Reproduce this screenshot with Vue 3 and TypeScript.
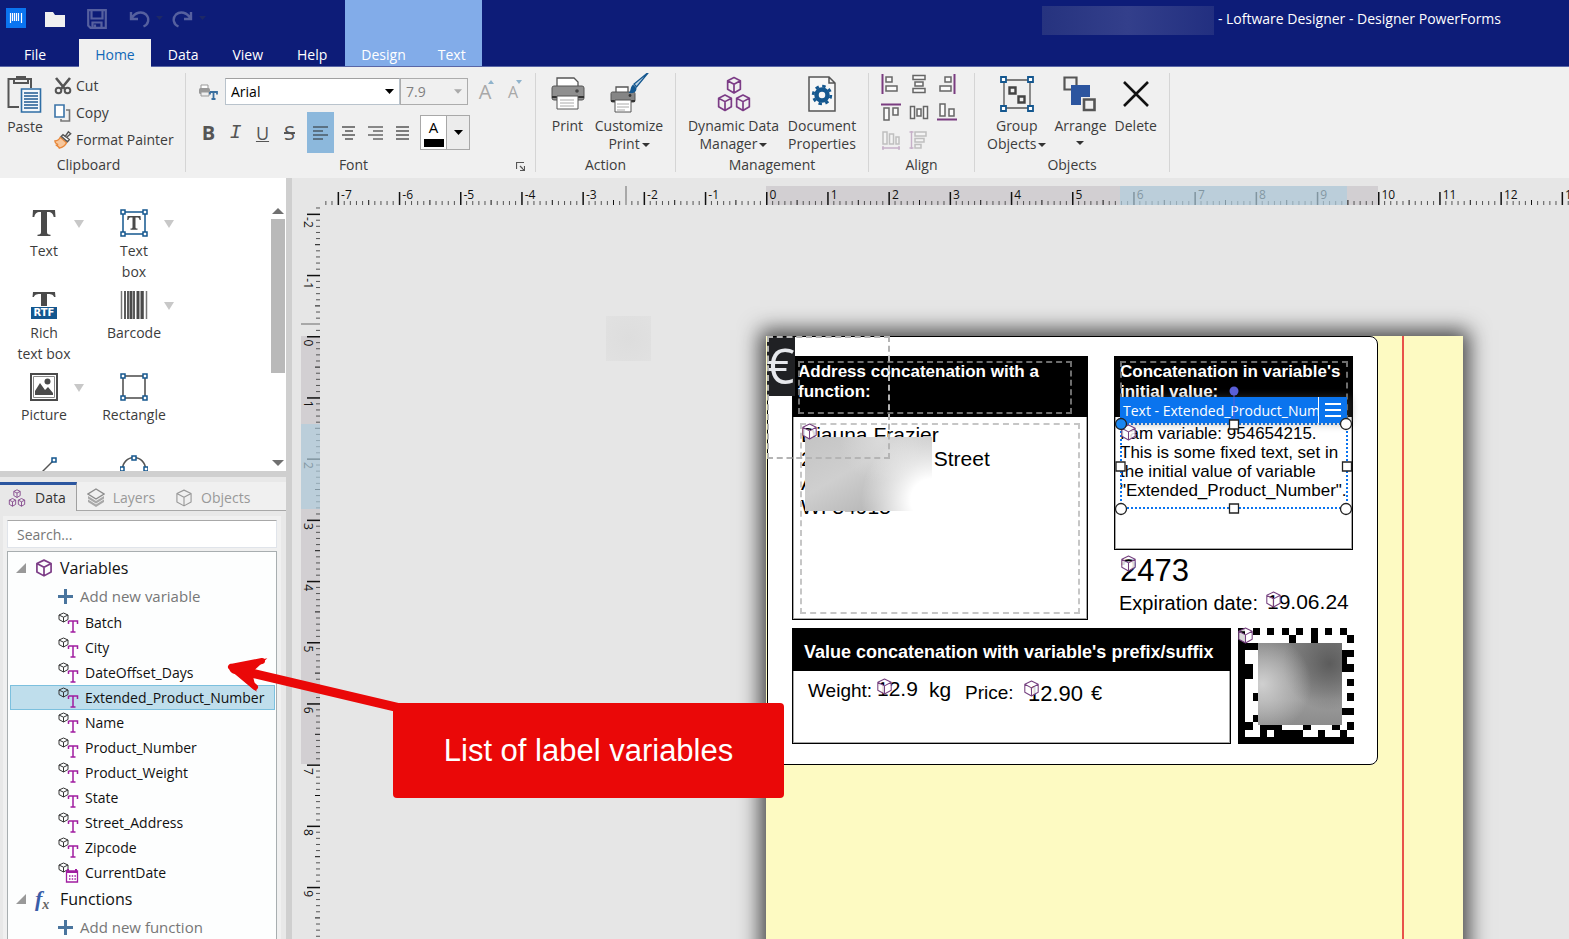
<script setup lang="ts">
import { computed, onBeforeUnmount, onMounted, ref } from 'vue'

interface Tick { pos: number; len: number; strong: boolean }
interface Mark { pos: number; label: string }
interface CanvasText { text: string; x: number; y: number; size: number; line: number }
interface Point { x: number; y: number }

const UNIT = 61.2
const ORIGIN_X = 445.5
const ORIGIN_Y = 130.5

function ticks(from: number, to: number, origin: number): Tick[] {
  const out: Tick[] = []
  for (let i = from; i <= to; i++) {
    const len = i % 10 === 0 ? 13 : i % 5 === 0 ? 5 : 4
    out.push({ pos: origin + (i * UNIT) / 10, len, strong: i % 5 === 0 })
  }
  return out
}
function marks(from: number, to: number, origin: number): Mark[] {
  const out: Mark[] = []
  for (let i = from; i <= to; i++) out.push({ pos: origin + i * UNIT, label: String(i) })
  return out
}

const view = ref({ w: window.innerWidth, h: window.innerHeight })
function measure() {
  view.value = { w: window.innerWidth, h: window.innerHeight }
}
onMounted(() => window.addEventListener('resize', measure))
onBeforeUnmount(() => window.removeEventListener('resize', measure))

const unitsX = computed(() => (view.value.w - 321 - ORIGIN_X) / UNIT)
const unitsY = computed(() => (view.value.h - 206 - ORIGIN_Y) / UNIT)
const hTicks = computed(() => ticks(-72, Math.floor(unitsX.value * 10), ORIGIN_X))
const hMarks = computed(() => marks(-7, Math.floor(unitsX.value), ORIGIN_X))
const vTicks = computed(() => ticks(-21, Math.floor(unitsY.value * 10), ORIGIN_Y))
const vMarks = computed(() => marks(-2, Math.floor(unitsY.value), ORIGIN_Y))

const search = ref('')
const fontName = ref('Arial')
const fontSize = ref('7.9')
const selected = ref('Extended_Product_Number')
const variables = ['Batch', 'City', 'DateOffset_Days', 'Extended_Product_Number', 'Name', 'Product_Number',
  'Product_Weight', 'State', 'Street_Address', 'Zipcode', 'CurrentDate']

const texts: CanvasText[] = [
  { text: '2473', x: 353, y: 217, size: 31, line: 36 },
  { text: 'Expiration date:', x: 352, y: 255, size: 20, line: 24 },
  { text: '19.06.24', x: 500, y: 254, size: 21, line: 24 },
  { text: 'Weight:', x: 41, y: 344, size: 19, line: 22 },
  { text: '12.9', x: 110, y: 342, size: 21, line: 22 },
  { text: 'kg', x: 162, y: 343, size: 21, line: 22 },
  { text: 'Price:', x: 198, y: 346, size: 19, line: 22 },
  { text: '12.90', x: 261, y: 347, size: 22, line: 22 },
  { text: '€', x: 324, y: 346, size: 20, line: 22 },
]
const badges: Point[] = [
  { x: 34, y: 87 }, { x: 353, y: 88 }, { x: 353, y: 219 }, { x: 498, y: 255 },
  { x: 109, y: 342 }, { x: 256, y: 344 }, { x: 470, y: 291 },
]

const matrix = [
  '1010101010101010',
  '1000000100100001',
  '1110001111001000',
  '1000000000000011',
  '1000000000000010',
  '1100000000000011',
  '1100000000000000',
  '1000000000000001',
  '1000000000000000',
  '1010000000000001',
  '1000000000000000',
  '1000000000000011',
  '1010000000000000',
  '1101110001000101',
  '1001011110010010',
  '1111111111111111',
]
const cells = matrix.flatMap((row, y) => [...row].flatMap((c, x) => (c === '1' ? [{ x, y }] : [])))
</script>

<template>
  <div class="app">
    <svg class="defs" aria-hidden="true">
      <symbol id="cube" viewBox="0 0 16 16">
        <path d="M8 1 14.3 4v7.6L8 15 1.7 11.6V4ZM1.7 4 8 7.4 14.3 4M8 7.4V15" stroke="currentColor" stroke-linejoin="round" />
      </symbol>
      <symbol id="cubes" viewBox="0 0 32 34">
        <g fill="none" stroke="currentColor" stroke-width="1.6" stroke-linejoin="round">
          <path id="cb" d="M16 1.5 22 4.5v8L16 16l-6-3.5v-8ZM10 4.5l6 3.2 6-3.2M16 7.700V16" />
          <use href="#cb" x="-8.500" y="16.500" />
          <use href="#cb" x="8.500" y="16.500" />
        </g>
      </symbol>
      <symbol id="tee" viewBox="0 0 24 28">
        <path d="M1 1h22l.5 7h-1.800C21 4.500 19.500 3 16 3h-1v20c0 2 .8 2.500 3.500 2.700V27h-13v-1.300C8.200 25.500 9 25 9 23V3H8C4.500 3 3 4.500 2.300 8H.5Z" fill="currentColor" />
      </symbol>
    </svg>

    <header class="top">
      <div class="titlebar">
        <div class="quick">
          <svg class="logo" viewBox="0 0 20 20"><rect width="20" height="20" fill="#0a74f0" /><path d="M4.500 5v10M6.500 5v8M8.500 5v8M10.500 5v8M12.500 5v8M15.500 5v10" stroke="#fff" stroke-width="1.200" /></svg>
          <button class="qb" aria-label="Open"><svg width="20" height="16" viewBox="0 0 20 16"><path d="M0 1h8l2 3h10v12H0Z" fill="#f0f0f0" /></svg></button>
          <button class="qb dim" aria-label="Save"><svg width="20" height="20" viewBox="0 0 20 20"><path d="M1.200 1.200h17.600v17.600H3.500l-2.300-2.300ZM4.500 1.500v8h11v-8M5.500 19v-5.500h9V19M8 15.500V18" fill="none" stroke="currentColor" stroke-width="2.200" /></svg></button>
          <button class="qb dim" aria-label="Undo"><svg width="34" height="18" viewBox="0 0 34 18"><path d="M2 2v7h7M2.500 8.500C6 2 13 1 17 4.500c4 4 2.500 10-2.500 12" fill="none" stroke="currentColor" stroke-width="2.400" /><path d="M27 6h7l-3.500 4Z" fill="#1d2866" /></svg></button>
          <button class="qb dim" aria-label="Redo"><svg width="34" height="18" viewBox="0 0 34 18"><path d="M19 2v7h-7M18.500 8.500C15 2 8 1 4 4.500c-4 4-2.500 10 2.500 12" fill="none" stroke="currentColor" stroke-width="2.400" /><path d="M27 6h7l-3.500 4Z" fill="#1d2866" /></svg></button>
        </div>
        <div class="title"><span class="redacted"></span><span>- Loftware Designer - Designer PowerForms</span></div>
      </div>
      <nav class="tabs">
        <button class="tab file">File</button>
        <button class="tab active">Home</button>
        <button class="tab wide">Data</button>
        <button class="tab wide">View</button>
        <button class="tab wide">Help</button>
        <div class="context">
          <button class="tab">Design</button>
          <button class="tab">Text</button>
        </div>
      </nav>
    </header>

    <div class="ribbon">
      <section class="group clipboard">
        <div class="body">
          <button class="big">
            <svg width="36" height="38" viewBox="0 0 36 38">
              <path d="M7 3H1.500v28H12M20 3h4v9M7 3h14v4H7ZM10 3V1h8v2" fill="none" stroke="#555" stroke-width="2" />
              <path d="M14.500 13h19v23h-19Z" fill="#f4f8fb" stroke="#2f6ea5" stroke-width="1.600" />
              <path d="M17 17h14M17 20h14M17 23h14M17 26h14M17 29h14M17 32h14" stroke="#1e5a92" stroke-width="1.500" />
            </svg>
            <span>Paste</span>
          </button>
          <div class="smalls">
            <button class="small"><svg width="18" height="18" viewBox="0 0 18 18"><path d="M2 1l9 11M16 1 7 12" stroke="#555" stroke-width="2.600" /><circle cx="4.500" cy="13.500" r="2.800" fill="none" stroke="#555" stroke-width="2" /><circle cx="13.500" cy="13.500" r="2.800" fill="none" stroke="#555" stroke-width="2" /></svg>Cut</button>
            <button class="small"><svg width="18" height="18" viewBox="0 0 18 18"><path d="M1 1h9v12H1Z" fill="#fff" stroke="#3b74a8" stroke-width="1.600" /><path d="M12 6h3.500v11H7v-2" fill="none" stroke="#777" stroke-width="1.600" /></svg>Copy</button>
            <button class="small"><svg width="20" height="20" viewBox="0 0 20 20"><path d="M1 11c4 0 5-2 6-4l7 6c-1 2-3 5-8 6-1-2-2-2-3-3 1 0 1-1 1-1-2-1-3-2-3-4Z" fill="#f7c79c" stroke="#e8883a" stroke-width="1.600" /><path d="m8 6 7 6 2-2.500-3-2.500 4.500-4L16 1l-3.500 5L10 4Z" fill="#fff" stroke="#555" stroke-width="1.600" /></svg>Format Painter</button>
          </div>
        </div>
        <h2>Clipboard</h2>
      </section>

      <section class="group font">
        <div class="body fontbody">
          <div class="fontrow">
            <svg class="pt" width="20" height="18" viewBox="0 0 20 18"><path d="M3 6V2h7v4" fill="#fff" stroke="#999" /><rect x="1" y="5" width="11" height="6" rx="1.500" fill="#999" /><path d="M3 9h8v4H3Z" fill="#eee" stroke="#999" /><path d="M12 9h7v2.500M12 11.500V9M15.500 9v7M13.500 16h4" fill="none" stroke="#3a6f9f" stroke-width="1.800" /></svg>
            <label class="combo family"><select v-model="fontName" aria-label="Font"><option>Arial</option></select><svg width="9" height="5" viewBox="0 0 9 5"><path d="M0 0h9L4.500 5Z" fill="#000" /></svg></label>
            <label class="combo size"><select v-model="fontSize" aria-label="Font size" disabled><option>7.9</option></select><svg width="8" height="5" viewBox="0 0 9 5"><path d="M0 0h9L4.500 5Z" fill="#aaa" /></svg></label>
            <button class="grow" aria-label="Grow font">A<svg width="6" height="4" viewBox="0 0 6 4"><path d="M0 4h6L3 0Z" fill="#8fb3cc" /></svg></button>
            <button class="grow less" aria-label="Shrink font">A<svg width="6" height="4" viewBox="0 0 6 4"><path d="M0 0h6L3 4Z" fill="#8fb3cc" /></svg></button>
          </div>
          <div class="fontrow second">
            <button class="fb bold">B</button>
            <button class="fb ital">I</button>
            <button class="fb under">U</button>
            <button class="fb strike">S</button>
            <button class="fb on" aria-label="Align left"><svg width="16" height="14" viewBox="0 0 16 14"><path d="M0 1h15M0 5h10M0 9h15M0 13h10" stroke="#4a5a66" stroke-width="1.500" /></svg></button>
            <button class="fb" aria-label="Align center"><svg width="14" height="14" viewBox="0 0 14 14"><path d="M0 1h13M3 5h8M0 9h13M3 13h8" stroke="#555" stroke-width="1.500" /></svg></button>
            <button class="fb" aria-label="Align right"><svg width="16" height="14" viewBox="0 0 16 14"><path d="M0 1h15M5 5h10M0 9h15M5 13h10" stroke="#666" stroke-width="1.500" /></svg></button>
            <button class="fb" aria-label="Justify"><svg width="14" height="14" viewBox="0 0 14 14"><path d="M0 1h13M0 5h13M0 9h13M0 13h13" stroke="#555" stroke-width="1.500" /></svg></button>
            <div class="color">
              <button class="ink">A<i></i></button>
              <button class="inkmore" aria-label="Text color"><svg width="9" height="5" viewBox="0 0 9 5"><path d="M0 0h9L4.500 5Z" fill="#000" /></svg></button>
            </div>
          </div>
        </div>
        <h2>Font</h2>
        <button class="launcher" aria-label="Font settings"><svg width="9" height="9" viewBox="0 0 9 9"><path d="M.5 7V.5H8M4 4l4 4M8.500 4v4.500H4" fill="none" stroke="#555" stroke-width="1.200" /></svg></button>
      </section>

      <section class="group action">
        <div class="body">
          <button class="big print">
            <svg width="34" height="36" viewBox="0 0 34 36">
              <path d="M6 10V2h17l4 4v4" fill="#fff" stroke="#555" stroke-width="1.300" />
              <rect x="1" y="10" width="32" height="14" rx="2" fill="#8f8f8f" stroke="#555" /><path d="M1 21h32" stroke="#333" stroke-width="2" /><circle cx="26" cy="15" r="1.800" fill="#444" />
              <path d="M6 20h21v13H6Z" fill="#fff" stroke="#555" /><path d="M9 24h14M9 27h14M9 30h14" stroke="#aaa" />
            </svg>
            <span>Print</span>
          </button>
          <button class="big custom">
            <svg width="40" height="40" viewBox="0 0 40 40">
              <path d="M7 20v-6h12v6" fill="#fff" stroke="#555" stroke-width="1.300" />
              <rect x="2" y="19" width="24" height="10" rx="1.500" fill="#858585" stroke="#555" /><path d="M2 28h24" stroke="#333" stroke-width="2" /><circle cx="21" cy="22.500" r="1.400" fill="#333" />
              <path d="M6 27h16v12H6Z" fill="#fff" stroke="#555" /><path d="M8 31h12M8 34h12M8 37h8" stroke="#aaa" />
              <path d="M38.500 0 25 11l2.500 3L39 0Z" fill="#b9d0e2" stroke="#14578f" stroke-width="1.300" /><path d="M24 11.500 27.500 15c0 5-4 5.500-8 5 3-2 1-5 4.500-8.500Z" fill="#14578f" />
            </svg>
            <span>Customize<br>Print<em></em></span>
          </button>
        </div>
        <h2>Action</h2>
      </section>

      <section class="group manage">
        <div class="body">
          <button class="big dyn"><svg class="purple" width="34" height="36"><use href="#cubes" /></svg><span>Dynamic Data<br>Manager<em></em></span></button>
          <button class="big doc">
            <svg width="28" height="36" viewBox="0 0 28 36">
              <path d="M1 1h20l6 6v28H1ZM21 1v6h6" fill="#f7f7f7" stroke="#555" stroke-width="1.500" />
              <circle cx="14" cy="19" r="5.500" fill="none" stroke="#14578f" stroke-width="4.500" />
              <circle cx="14" cy="19" r="8.800" fill="none" stroke="#14578f" stroke-width="2.800" stroke-dasharray="3.450 3.450" />
            </svg>
            <span>Document<br>Properties</span>
          </button>
        </div>
        <h2>Management</h2>
      </section>

      <section class="group align">
        <div class="body aligngrid">
          <button aria-label="Align left edges"><svg viewBox="0 0 20 20"><path d="M1.500 0v20" stroke="#7a3c80" stroke-width="2" /><path d="M5 3h6v5H5ZM5 12h11v5H5Z" /></svg></button>
          <button aria-label="Center horizontally"><svg viewBox="0 0 20 20"><path d="M4 1.500h12v4H4ZM6 8h8v4H6ZM4 14.500h12v4H4Z" /></svg></button>
          <button aria-label="Align right edges"><svg viewBox="0 0 20 20"><path d="M17.500 0v20" stroke="#7a3c80" stroke-width="2" /><path d="M8 3h6v5H8ZM3 12h11v5H3Z" /></svg></button>
          <button aria-label="Align top edges"><svg viewBox="0 0 20 20"><path d="M0 2.500h20" stroke="#7a3c80" stroke-width="2" /><path d="M3 6h5v12H3ZM12 6h5v7h-5Z" /></svg></button>
          <button aria-label="Center vertically"><svg viewBox="0 0 20 20"><path d="M1.500 4.500h4v12h-4ZM8 7h4v7H8ZM14.500 4.500h4v12h-4Z" /></svg></button>
          <button aria-label="Align bottom edges"><svg viewBox="0 0 20 20"><path d="M0 17.500h20" stroke="#7a3c80" stroke-width="2" /><path d="M3 2h5v12H3ZM12 7h5v7h-5Z" /></svg></button>
          <button class="off" disabled aria-label="Distribute horizontally"><svg viewBox="0 0 20 20"><path d="M1 18h18M2 16v4M18 16v4" stroke="#7a3c80" stroke-width="1.400" /><path d="M2 2h4v12H2ZM8.500 4h4v10h-4ZM15 7h3v7h-3Z" /></svg></button>
          <button class="off" disabled aria-label="Distribute vertically"><svg viewBox="0 0 20 20"><path d="M2.500 1v18M.5 2h4M.5 18h4" stroke="#7a3c80" stroke-width="1.400" /><path d="M6 2h11v4H6ZM6 8.500h9v3.500H6ZM6 14.500h6V18H6Z" /></svg></button>
        </div>
        <h2>Align</h2>
      </section>

      <section class="group objects">
        <div class="body">
          <button class="big grp">
            <svg width="34" height="36" viewBox="0 0 34 36">
              <path d="M4 4h26v28H4Z" fill="none" stroke="#555" stroke-width="1.300" />
              <g fill="#fff" stroke="#14578f" stroke-width="1.800"><path d="M1 1h5v5H1ZM28 1h5v5h-5ZM1 30h5v5H1ZM28 30h5v5h-5Z" /></g>
              <path d="M9.500 11.500h6v6h-6ZM18.500 20.500h6v6h-6Z" fill="none" stroke="#444" stroke-width="2.400" />
            </svg>
            <span>Group<br>Objects<em></em></span>
          </button>
          <button class="big arr">
            <svg width="34" height="36" viewBox="0 0 34 36">
              <path d="M1.500 1.500h12v12h-12Z" fill="none" stroke="#555" stroke-width="2.200" /><path d="M8 9h19v20H8Z" fill="#2c559f" /><path d="M18 21h16v15H18Z" fill="#f0f0f0" /><path d="M21 23.500h10.500v10.500H21Z" fill="none" stroke="#555" stroke-width="2.600" />
            </svg>
            <span>Arrange<br><em></em></span>
          </button>
          <button class="big del">
            <svg width="28" height="36" viewBox="0 0 28 36"><path d="M2 6l24 24M26 6 2 30" stroke="#111" stroke-width="2.600" /></svg>
            <span>Delete</span>
          </button>
        </div>
        <h2>Objects</h2>
      </section>
    </div>

    <main class="work">
      <aside class="side">
        <div class="toolbox">
          <div class="tools">
            <button class="tool"><svg class="ic dark" width="24" height="28"><use href="#tee" /></svg><span>Text</span><i class="more"></i></button>
            <button class="tool"><svg class="ic" width="28" height="28" viewBox="0 0 28 28"><path d="M3 3h22v22H3Z" fill="none" stroke="#14578f" stroke-width="1.500" /><path d="M7.500 7h13l.3 4h-1.200c-.4-1.800-1-2.400-2.600-2.400h-1.500V18c0 1.200.4 1.500 2 1.600v1.100h-7v-1.100c1.600-.1 2-.4 2-1.600V8.600H11c-1.600 0-2.200.6-2.600 2.400H7.200Z" fill="#4a4a4a" /><path d="M1 1h4v4H1ZM23 1h4v4h-4ZM1 23h4v4H1ZM23 23h4v4h-4Z" fill="#fff" stroke="#14578f" stroke-width="1.500" /></svg><span>Text<br>box</span><i class="more"></i></button>
            <button class="tool"><span class="ic rtf"><svg class="dark" width="24" height="16" viewBox="0 0 24 16"><path d="M1 1h22l.5 5h-1.500C21.500 4 20 3 16 3h-1v12H9V3H8C4 3 2.500 4 2 6H.5Z" fill="currentColor" /></svg><b>RTF</b></span><span>Rich<br>text box</span></button>
            <button class="tool"><svg class="ic" width="28" height="28" viewBox="0 0 28 28"><path d="M1.500 0v28M26.500 0v28M23 0v28" stroke="#777" stroke-width="1.500" /><path d="M5 0v28M8 0v28M14 0v28" stroke="#4a4a4a" stroke-width="1.800" /><path d="M11 0v28M18 0v28M22 0v28" stroke="#4a4a4a" stroke-width="3" /></svg><span>Barcode</span><i class="more"></i></button>
            <button class="tool"><svg class="ic" width="28" height="28" viewBox="0 0 28 28"><path d="M1 1h26v26H1Z" fill="#fff" stroke="#4a4a4a" stroke-width="2" /><path d="M3.500 3.500h21v21h-21Z" fill="none" stroke="#888" /><path d="M5 22v-4l5-8 5 7 3-3 5 6v2Z" fill="#4a4a4a" /><circle cx="17.500" cy="8.500" r="3" fill="#4a4a4a" /></svg><span>Picture</span><i class="more"></i></button>
            <button class="tool"><svg class="ic" width="28" height="28" viewBox="0 0 28 28"><path d="M3 3h22v22H3Z" fill="none" stroke="#4a4a4a" stroke-width="1.500" /><path d="M1 1h4v4H1ZM23 1h4v4h-4ZM1 23h4v4H1ZM23 23h4v4h-4Z" fill="#fff" stroke="#14578f" stroke-width="1.500" /></svg><span>Rectangle</span></button>
            <button class="tool" aria-label="Line"><svg class="ic" width="28" height="28" viewBox="0 0 28 28"><path d="M24 5 2 27" stroke="#555" stroke-width="1.400" /><path d="M22 3h4v4h-4Z" fill="#fff" stroke="#14578f" stroke-width="1.500" /></svg></button>
            <button class="tool" aria-label="Ellipse"><svg class="ic" width="28" height="28" viewBox="0 0 28 28"><circle cx="14" cy="14" r="11.500" fill="none" stroke="#555" stroke-width="1.500" /><path d="M12 1h4v4h-4ZM0 12h4v4H0ZM24 12h4v4h-4Z" fill="#fff" stroke="#14578f" stroke-width="1.500" /></svg></button>
          </div>
          <div class="scroll"><i class="up"></i><b></b><i class="down"></i></div>
        </div>

        <div class="panes">
          <button class="pane on"><svg class="purple" width="18" height="18"><use href="#cubes" /></svg>Data</button>
          <button class="pane"><svg width="18" height="20" viewBox="0 0 18 20"><path d="M9 1 17 6 9 11 1 6Z" fill="#f0f0f0" stroke="#8c8c8c" stroke-width="1.400" /><path d="M1 8l8 5 8-5v6l-8 5-8-5Z" fill="#a8a8a8" /><path d="M1 11l8 5 8-5" fill="none" stroke="#e8e8e8" /></svg>Layers</button>
          <button class="pane"><svg width="18" height="20" fill="none"><use href="#cube" /></svg>Objects</button>
        </div>

        <div class="data">
          <input v-model="search" class="search" type="text" placeholder="Search..." aria-label="Search">
          <div class="tree">
            <div class="head"><i class="twist"></i><svg class="purple" width="18" height="18" fill="none" stroke-width="1.500"><use href="#cube" /></svg>Variables</div>
            <button class="add"><svg width="15" height="15" viewBox="0 0 15 15"><path d="M7.500 0v15M0 7.500h15" stroke="#4a759e" stroke-width="3" /></svg>Add new variable</button>
            <button v-for="v in variables" :key="v" class="var" :class="{ sel: v === selected }" @click="selected = v">
              <svg width="21" height="21" viewBox="0 0 21 21">
                <path d="M5.500 1 10 3v4.500L5.500 10 1 7.500V3ZM1 3l4.500 2.200L10 3M5.500 5.200V10" fill="none" stroke="#333" />
                <path v-if="v !== 'CurrentDate'" d="M10.500 9h9v3M10.500 12V9M15 9v11M12.500 20h5" fill="none" stroke="#a01ca0" stroke-width="1.500" />
                <g v-else><path d="M8.500 9h11v11h-11Z" fill="#fff" stroke="#a01ca0" stroke-width="1.300" /><path d="M8 10h12M10 7v3M18 7v3" stroke="#a01ca0" stroke-width="2" /><path d="M11 14h7M11 17h7" stroke="#a01ca0" stroke-width="1.500" stroke-dasharray="1.500 1.200" /></g>
              </svg>{{ v }}
            </button>
            <div class="head"><i class="twist"></i><span class="fx">f<sub>x</sub></span>Functions</div>
            <button class="add"><svg width="15" height="15" viewBox="0 0 15 15"><path d="M7.500 0v15M0 7.500h15" stroke="#4a759e" stroke-width="3" /></svg>Add new function</button>
          </div>
        </div>
      </aside>

      <section class="canvas">
        <svg class="hruler">
          <rect x="445" width="612" height="19" fill="#d2cfd2" />
          <rect v-for="t in hTicks" :key="t.pos" :x="t.pos - 0.5" :y="19 - t.len" :width="t.len === 13 ? 1.500 : 1" :height="t.len" :fill="t.strong ? '#111' : '#555'" />
          <text v-for="m in hMarks" :key="m.label" :x="m.pos + 3" y="13">{{ m.label }}</text>
          <rect x="304" width="2" height="19" fill="#a8a8a8" />
          <rect x="799" width="227" height="19" fill="#b0cddd" opacity=".7" />
        </svg>
        <svg class="vruler">
          <rect y="130" width="19" height="428" fill="#d2cfd2" />
          <rect v-for="t in vTicks" :key="t.pos" :x="19 - t.len" :y="t.pos - 0.5" :width="t.len" :height="t.len === 13 ? 1.500 : 1" :fill="t.strong ? '#111' : '#555'" />
          <text v-for="m in vMarks" :key="m.label" :transform="`translate(3 ${m.pos + 3}) rotate(90)`">{{ m.label }}</text>
          <rect y="117" width="19" height="2" fill="#a8a8a8" />
          <rect y="218" width="19" height="85" fill="#b0cddd" opacity=".7" />
        </svg>

        <div class="stage">
          <div class="smudge"></div>
          <div class="page"></div>
          <div class="label">
            <div class="euro"><span>€</span></div>
            <div class="frame address">
              <h3>Address concatenation with a function:</h3>
            </div>
            <div class="frame initial">
              <h3>Concatenation in variable's initial value:</h3>
            </div>
            <div class="frame prefix">
              <h3>Value concatenation with variable's prefix/suffix</h3>
            </div>
            <div class="dash picture"></div>
            <div class="dash addresstitle"></div>
            <div class="dash initialtitle"></div>
            <div class="dash person">Djauna Frazier<br>2<span class="gap"></span>Street<br>A<br>WI 54915</div>
            <div class="blur name"></div>
            <p v-for="t in texts" :key="t.text" class="txt" :style="{ left: t.x + 'px', top: t.y + 'px', fontSize: t.size + 'px', lineHeight: t.line + 'px' }">{{ t.text }}</p>
            <svg class="matrix" viewBox="0 0 16 16" preserveAspectRatio="none" shape-rendering="crispEdges">
              <rect width="16" height="16" fill="#fff" />
              <rect v-for="c in cells" :key="c.y * 16 + c.x" :x="c.x" :y="c.y" width="1" height="1" />
            </svg>
            <div class="blur code"></div>
            <div class="selected">I am variable: 954654215. This is some fixed text, set in the initial value of variable "Extended_Product_Number".</div>
            <div class="bar"><span>Text - Extended_Product_Number</span><button aria-label="Object menu"><svg width="16" height="14" viewBox="0 0 16 14"><path d="M0 1h16M0 7h16M0 13h16" stroke="#fff" stroke-width="2" /></svg></button></div>
            <svg v-for="b in badges" :key="b.x * 1000 + b.y" class="badge" :style="{ left: b.x + 'px', top: b.y + 'px' }"><use href="#cube" /></svg>
            <svg class="handles" viewBox="0 0 240 130">
              <path d="M120 8v28" stroke="#5a5fd8" /><circle cx="120" cy="8" r="4.500" fill="#5a5fd8" />
              <g fill="#fff" stroke="#222" stroke-width="1.300">
                <circle cx="7" cy="41" r="5.500" fill="#1a86f0" /><circle cx="232" cy="41" r="5.500" /><circle cx="7" cy="126" r="5.500" /><circle cx="232" cy="126" r="5.500" />
                <path d="M115.500 37h9v9h-9ZM115.500 121h9v9h-9ZM2 79h9v9H2ZM228.500 79h9v9h-9Z" />
              </g>
            </svg>
          </div>
        </div>
      </section>
    </main>

    <div class="callout">
      <svg viewBox="0 0 180 50"><path d="M6 11 176 51" class="shaft" /><path d="M2 9 36 2 23 14 27 31Z" class="tip" /><path d="M3 9 34 3M3 9 27 29" /></svg>
      <p>List of label variables</p>
    </div>
  </div>
</template>

<style>
html, body { margin: 0; }
</style>

<style scoped>
.app { position: relative; height: 100vh; overflow: hidden; display: flex; flex-direction: column; font: 14px/18px "Open Sans", "Noto Sans", sans-serif; color: #3c3c3c; background: #e6e6e6; }
.defs { position: absolute; width: 0; height: 0; }
button { font: inherit; color: inherit; background: none; border: 0; padding: 0; margin: 0; }
h2, h3, p { margin: 0; font-weight: 400; }
svg { display: block; flex: none; }
.purple { color: #7c3c86; }
.dark { color: #4a4a4a; }

.top { background: #0d1c78; color: #fff; border-bottom: 1px solid #5966a6; }
.titlebar { display: flex; justify-content: space-between; height: 39px; }
.quick { display: flex; align-items: center; height: 37px; padding-left: 6px; }
.logo { width: 20px; height: 20px; margin-right: 19px; margin-bottom: 2px; }
.qb { margin-right: 22px; }
.qb.dim { color: #56609f; }
.qb.dim + .qb.dim { margin-right: 9px; }
.title { display: flex; align-items: flex-start; padding: 6px 68px 0 0; line-height: 26px; }
.redacted { width: 172px; height: 29px; margin-right: 4px; background: linear-gradient(90deg, #26337f, #333f8b 50%, #222f80); }
.tabs { display: flex; height: 27px; }
.tab { padding: 4px 16px 0; }
.tab.wide { padding: 4px 17px 0; }
.tab.file { padding: 4px 24px 0; margin-right: 9px; }
.tab.active { background: #f0f0f0; color: #1168b8; position: relative; margin-bottom: -1px; }
.context { position: relative; display: flex; margin-left: 1px; background: #82ace9; }
.context::before { content: ""; position: absolute; left: 0; right: 0; bottom: 100%; height: 39px; background: #82ace9; }

.ribbon { display: flex; height: 105px; padding: 6px 0 0; background: #f0f0f0; }
.group { position: relative; display: flex; flex-direction: column; height: 99px; border-right: 1px solid #d5d5d5; box-sizing: border-box; }
.group h2 { font-size: 14px; line-height: 18px; text-align: center; margin-bottom: -2px; }
.body { flex: 1; display: flex; align-items: flex-start; }
.clipboard { width: 186px; }
.clipboard h2 { padding-right: 8px; }
.font { width: 350px; }
.font h2 { padding-right: 14px; }
.action { width: 140px; }
.manage { width: 193px; }
.align { width: 106px; }
.objects { width: 195px; }
.big { display: flex; flex-direction: column; align-items: center; line-height: 18px; padding-top: 3px; white-space: nowrap; }
.big span { margin-top: 5px; }
.big em { display: inline-block; border: 4px solid transparent; border-top-color: #333; border-bottom: 0; margin-left: 2px; vertical-align: middle; }
.clipboard .big { width: 50px; }
.clipboard .big span { margin-top: 4px; }
.smalls { display: flex; flex-direction: column; padding-left: 4px; margin-top: -1px; }
.small { display: flex; align-items: center; gap: 4px; height: 27px; white-space: nowrap; }
.small svg { width: 18px; }
.print { width: 63px; }
.custom { width: 60px; }
.custom svg { height: 40px; margin: -3px 0 -1px; }
.dyn { width: 115px; }
.doc { width: 62px; }
.grp { width: 84px; }
.arr { width: 44px; }
.arr em { display: block; width: 0; margin: 6px auto 0; }
.arr br { display: none; }
.del { width: 67px; }

.fontbody { flex-direction: column; }
.fontrow { display: flex; align-items: center; height: 37px; padding-left: 12px; }
.pt { margin-right: 7px; }
.combo { position: relative; display: block; height: 27px; box-sizing: border-box; border: 1px solid #b9c3cc; border-top-color: #a0a0a0; background: #fff; }
.combo select { width: 100%; height: 100%; appearance: none; border: 0; background: none; font: inherit; padding: 0 5px; color: #000; opacity: 1; }
.combo svg { position: absolute; right: 5px; top: 10px; pointer-events: none; }
.family { width: 175px; }
.size { width: 68px; background: #f0f0f0; border-color: #acacac; }
.size select { color: #808080; }
.grow { position: relative; font: 20px/24px "Open Sans", sans-serif; color: #a8a8a8; width: 16px; margin-left: 9px; }
.grow svg { position: absolute; right: -1px; top: 0; }
.less { font-size: 16px; margin-left: 12px; }
.second { height: 41px; padding-left: 9px; margin-top: 2px; }
.fb { width: 27px; height: 41px; display: flex; align-items: center; justify-content: center; font: 20px/24px "Open Sans", sans-serif; color: #555; }
.fb.bold { font-weight: 700; }
.fb.ital { font-family: "Liberation Mono", monospace; font-style: italic; }
.fb.under { text-decoration: underline; font-size: 18px; }
.fb.strike { text-decoration: line-through; margin-right: 4px; }
.fb.on { background: #8cb8dc; margin-right: 1px; }
.color { display: flex; margin-left: 4px; height: 35px; box-sizing: border-box; border: 1px solid #a8a8a8; background: #fff; }
.ink { width: 25px; font-size: 15px; line-height: 20px; color: #000; display: flex; flex-direction: column; align-items: center; gap: 2px; padding-top: 1px; }
.ink i { width: 20px; height: 8px; background: #000; }
.inkmore { width: 23px; border-left: 1px solid #a8a8a8; background: #ececec; display: flex; align-items: center; justify-content: center; }
.launcher { position: absolute; right: 10px; bottom: 1px; }

.aligngrid { display: grid; grid-template-columns: repeat(3, 20px); gap: 8px; padding: 1px 0 0 12px; align-content: start; }
.aligngrid svg { width: 20px; height: 20px; fill: #fafafa; stroke: #666; stroke-width: 1.5px; }
.off { opacity: .35; }

.work { flex: 1; min-height: 0; display: flex; }
.side { width: 286px; flex: none; display: flex; flex-direction: column; border-right: 6px solid #cfcfcf; background: #e8e8e8; }
.toolbox { position: relative; display: flex; height: 293px; background: #fff; border-bottom: 6px solid #cfcfcf; overflow: hidden; flex: none; }
.tools { display: grid; grid-template-columns: 90px 90px; grid-auto-rows: 82px; padding-top: 30px; flex: 1; }
.tool { position: relative; display: flex; flex-direction: column; align-items: center; line-height: 21px; padding-right: 2px; }
.tool .ic { margin: 1px 0 3px; }
.tool .more { position: absolute; left: 74px; top: 12px; border: 5px solid transparent; border-top: 8px solid #c8c8c8; border-bottom: 0; }
.rtf { display: flex; flex-direction: column; align-items: center; height: 28px; }
.rtf b { width: 26px; background: #14578f; color: #fff; font: 700 10px/12px "DejaVu Sans", sans-serif; text-align: center; }
.scroll { width: 14px; display: flex; flex-direction: column; align-items: center; padding: 30px 1px 5px 0; }
.scroll b { width: 14px; height: 154px; background: #b9b9b9; margin: 5px 0 auto; }
.up { border: 6px solid transparent; border-bottom-color: #707070; border-top: 0; }
.down { border: 6px solid transparent; border-top-color: #707070; border-bottom: 0; }

.panes { display: flex; height: 29px; margin-top: 5px; background: #f0f0f0; flex: none; }
.pane { display: flex; align-items: center; gap: 8px; color: #999; padding: 3px 10px 0; border-bottom: 1px solid #a8a8a8; }
.pane:last-child { flex: 1; gap: 8px; }
.pane.on { color: #333; background: #e8e8e8; border-top: 3px solid #2b56a0; border-right: 1px solid #a0a0a0; border-bottom: 0; gap: 9px; padding: 0 10px 0 8px; }
.data { flex: 1; min-height: 0; display: flex; flex-direction: column; gap: 3px; margin: 5px 5px 0 3px; padding: 4px 4px 0; background: #f0f0f0; }
.search { height: 28px; box-sizing: border-box; border: 1px solid #e0e4ea; border-top-color: #a8a8a8; font: inherit; padding: 0 9px; background: #fff; flex: none; }
.search::placeholder { color: #777; opacity: 1; }
.tree { flex: 1; min-height: 0; overflow: hidden; background: #fdfefe; border: 1px solid #a8aeb0; border-bottom: 0; padding: 2px 1px 0 2px; color: #111; }
.head { display: flex; align-items: center; height: 28px; font-size: 16px; }
.head svg { margin: 0 7px 0 9px; }
.twist { margin-left: 6px; border: 5px solid transparent; border-right-color: #999; border-bottom-color: #999; }
.fx { width: 18px; margin: 0 7px 0 9px; font: italic 700 22px/24px "Liberation Serif", serif; color: #3a5da8; white-space: nowrap; }
.fx sub { font-size: 14px; line-height: 10px; vertical-align: -3px; color: #666; }
.add { display: flex; align-items: center; gap: 7px; height: 28px; padding-left: 48px; color: #777; white-space: nowrap; font-size: 15px; }
.var { display: flex; align-items: center; width: 100%; height: 25px; box-sizing: border-box; padding-left: 47px; gap: 6px; border: 1px solid transparent; }
.sel { background: #bfdeec; border-color: #7cc0de; }

.canvas { flex: 1; min-width: 0; display: grid; grid-template-columns: 20px 1fr; grid-template-rows: 20px 1fr; padding: 8px 0 0 9px; background: #e6e6e6; }
.hruler { grid-column: 2; width: 100%; height: 20px; }
.vruler { grid-row: 2; width: 20px; height: 100%; }
.hruler text, .vruler text { font: 12px "Open Sans", sans-serif; fill: #111; }
.stage { position: relative; overflow: hidden; }
.smudge { position: absolute; left: 285px; top: 110px; width: 45px; height: 45px; background: radial-gradient(circle, #dddddd, #e1e1e1); }
.page { position: absolute; left: 445px; top: 130px; bottom: -30px; width: 697px; background: linear-gradient(90deg, transparent 636px, #e8524a 636px, #e8524a 638px, transparent 638px) #fdfac2; box-shadow: 0 0 20px 6px rgba(0, 0, 0, .7); }
.label { position: absolute; left: 446px; top: 130px; width: 611px; height: 429px; box-sizing: border-box; background: #fff; border-radius: 0 8px 8px 0; outline: 1px solid #000; outline-offset: -1px; color: #000; font-family: "Liberation Sans", Arial, sans-serif; }
.label > * { position: absolute; }
.euro { left: 0; top: 1px; width: 28px; height: 59px; background: #202124; color: #e6e8ec; overflow: hidden; z-index: 1; }
.euro span { display: block; margin-left: -1px; font: 50px/56px "Open Sans", sans-serif; }
.frame { box-sizing: border-box; border: 1px solid #000; outline: 1px solid rgba(0, 0, 0, .35); outline-offset: -2px; }
.frame h3 { background: #000; color: #fff; font-weight: 700; font-size: 17px; line-height: 20px; padding: 5px 5px 4px; }
.address { left: 25px; top: 20px; width: 296px; height: 264px; }
.address h3 { height: 51px; padding-right: 40px; }
.initial { left: 347px; top: 20px; width: 239px; height: 194px; }
.initial h3 { height: 51px; padding-right: 0; }
.prefix { left: 25px; top: 292px; width: 439px; height: 116px; }
.prefix h3 { font-size: 18px; padding: 13px 0 9px 11px; white-space: nowrap; }
.dash { box-sizing: border-box; outline: 2px dashed #c6c6c6; outline-offset: -2px; }
.picture { left: 0; top: 0; width: 123px; height: 123px; outline-color: #b4b4b4; z-index: 2; }
.addresstitle { left: 31px; top: 25px; width: 274px; height: 53px; outline-color: #6e6e6e; }
.initialtitle { left: 353px; top: 25px; width: 228px; height: 60px; outline-color: #6e6e6e; }
.person { left: 33px; top: 87px; width: 280px; height: 191px; padding-left: 1px; font-size: 21px; line-height: 24px; white-space: nowrap; }
.gap { display: inline-block; width: 121px; }
.name { left: 38px; top: 101px; width: 127px; height: 74px; background: radial-gradient(circle at 100% 85%, #fff 15%, rgba(255, 255, 255, 0) 50%), radial-gradient(circle at 60% 5%, #dadada, transparent 40%), linear-gradient(150deg, #c4c4c4, #cfcfcf 40%, #b8b8b8 75%); }
.txt { white-space: nowrap; }
.matrix { left: 471px; top: 292px; width: 116px; height: 116px; }
.code { left: 491px; top: 307px; width: 84px; height: 82px; background: radial-gradient(circle at 5% 50%, #d0d0d0, transparent 55%), radial-gradient(circle at 85% 25%, #5c5c5c, transparent 50%), linear-gradient(180deg, #828282, #9a9a9a 70%, #8c8c8c); }
.selected { left: 353px; top: 87px; width: 228px; height: 86px; padding-top: 1px; box-sizing: border-box; outline: 2px dotted #0a74f0; outline-offset: -2px; font-size: 17px; line-height: 19px; }
.bar { left: 353px; top: 61px; width: 227px; height: 26px; display: flex; background: #0a74ee; color: #fff; font: 14px/27px "Open Sans", sans-serif; box-shadow: 3px 0 8px rgba(90, 90, 90, .5); }
.bar span { flex: 1; min-width: 0; overflow: hidden; white-space: nowrap; padding-left: 3px; }
.bar button { width: 29px; border-left: 1px solid #fff; display: flex; align-items: center; justify-content: center; }
.badge { width: 17px; height: 17px; color: #75407f; fill: rgba(255, 255, 255, .85); stroke-width: 1px; }
.handles { left: 347px; top: 47px; width: 240px; height: 130px; overflow: visible; }

.callout { position: absolute; left: 393px; top: 703px; pointer-events: none; }
.callout svg { position: absolute; left: -165px; top: -45px; width: 180px; height: 50px; overflow: visible; fill: none; stroke: #ea0808; stroke-width: 6px; stroke-linecap: round; }
.callout .shaft { stroke-width: 9px; }
.callout .tip { fill: #ea0808; stroke-width: 2px; }
.callout p { position: relative; width: 391px; line-height: 95px; border-radius: 4px; background: #ea0808; color: #fff; text-align: center; font-size: 31px; font-family: "Liberation Sans", Arial, sans-serif; }
</style>
